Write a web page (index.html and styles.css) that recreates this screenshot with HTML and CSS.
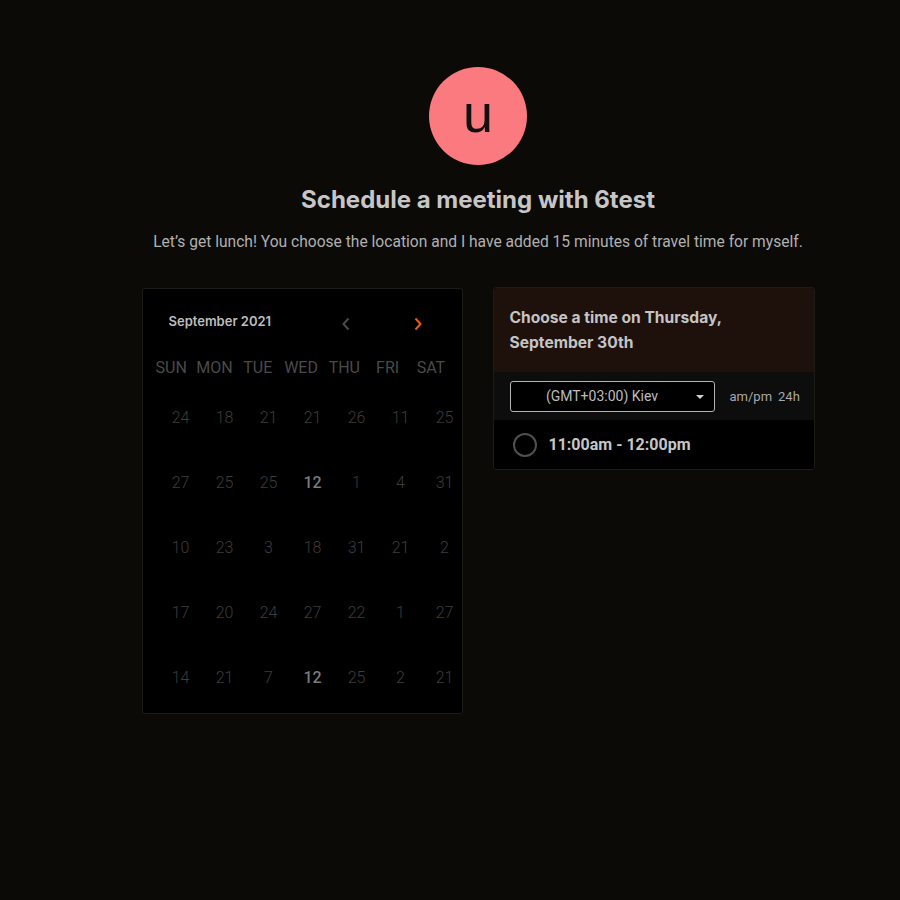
FILE: index.html
```html
<!DOCTYPE html>
<html>
<head>
<meta charset="utf-8">
<link rel="stylesheet" href="styles.css">
</head>
<body>
<main class="page">
  <div class="avatar">u</div>
  <h1 class="title">Schedule a meeting with 6test</h1>
  <p class="subtitle">Let’s get lunch! You choose the location and I have added 15 minutes of travel time for myself.</p>
  <div class="cards">
    <section class="calendar">
      <div class="cal-head">
        <span class="month">September 2021</span>
        <div class="nav">
          <svg class="chev prev" width="10" height="14" viewBox="0 0 10 14"><path d="M7.5 1.5 L2.5 7 L7.5 12.5" fill="none" stroke="currentColor" stroke-width="2"/></svg>
          <svg class="chev next" width="10" height="14" viewBox="0 0 10 14"><path d="M2.5 1.5 L7.5 7 L2.5 12.5" fill="none" stroke="currentColor" stroke-width="2"/></svg>
        </div>
      </div>
      <div class="weekdays">
        <span>SUN</span><span>MON</span><span>TUE</span><span>WED</span><span>THU</span><span>FRI</span><span>SAT</span>
      </div>
      <div class="days">
        <span>24</span><span>18</span><span>21</span><span>21</span><span>26</span><span>11</span><span>25</span>
        <span>27</span><span>25</span><span>25</span><span class="active">12</span><span>1</span><span>4</span><span>31</span>
        <span>10</span><span>23</span><span>3</span><span>18</span><span>31</span><span>21</span><span>2</span>
        <span>17</span><span>20</span><span>24</span><span>27</span><span>22</span><span>1</span><span>27</span>
        <span>14</span><span>21</span><span>7</span><span class="active">12</span><span>25</span><span>2</span><span>21</span>
      </div>
    </section>
    <section class="times">
      <div class="times-head">
        <h2>Choose a time on Thursday, September 30th</h2>
      </div>
      <div class="tz-row">
        <div class="tz-select">
          <span>(GMT+03:00) Kiev</span>
          <svg class="caret" width="8" height="4" viewBox="0 0 8 4"><path d="M0 0 H8 L4 4 Z" fill="#d0d0d0"/></svg>
        </div>
        <div class="fmt"><span>am/pm</span><span>24h</span></div>
      </div>
      <div class="slot">
        <span class="radio"></span>
        <span class="slot-text">11:00am - 12:00pm</span>
      </div>
    </section>
  </div>
</main>
</body>
</html>
```

FILE: styles.css
```css
html, body {
  margin: 0;
  padding: 0;
  background: #0b0a07;
}
.page {
  width: 900px;
  box-sizing: border-box;
  padding: 67px 0 0 56px;
  display: flex;
  flex-direction: column;
  align-items: center;
  font-family: Roboto, "Noto Sans", sans-serif;
}
.avatar {
  width: 98px;
  height: 98px;
  border-radius: 50%;
  background: #fa7a7f;
  color: #111;
  font-family: "Liberation Sans", Arial, sans-serif;
  font-size: 54px;
  line-height: 92px;
  text-align: center;
}
.title {
  margin: 20px 0 0;
  font-family: Inter, sans-serif;
  font-weight: 700;
  font-size: 24px;
  line-height: 30px;
  color: #c6c6c6;
  letter-spacing: 0;
}
.subtitle {
  margin: 17px 0 0;
  font-size: 15.6px;
  line-height: 20px;
  color: #b0b0b0;
}
.cards {
  margin-top: 35px;
  display: flex;
  align-items: flex-start;
  gap: 30px;
}
.calendar {
  width: 321px;
  height: 426px;
  box-sizing: border-box;
  background: #000;
  border: 1px solid #1d1b16;
  border-radius: 3px;
  margin-top: 1px;
  padding: 23px 0 0 7px;
}
.cal-head {
  display: flex;
  align-items: center;
  height: 18px;
  padding-left: 19px;
}
.month {
  font-family: Inter, sans-serif;
  font-weight: 600;
  font-size: 13px;
  color: #bdbdbd;
}
.nav {
  display: flex;
  gap: 62px;
  margin-left: 70px;
  margin-top: 6px;
}
.chev { display: block; }
.chev.prev { color: #4a4a4a; }
.chev.next { color: #e85a1b; }
.weekdays {
  display: grid;
  grid-template-columns: repeat(7, 43.3px);
  margin-top: 27px;
  height: 20px;
  align-items: center;
  font-size: 16px;
  color: #4a4a4a;
  text-align: center;
}
.days {
  display: grid;
  grid-template-columns: repeat(7, 44px);
  grid-auto-rows: 65px;
  margin: 8px 0 0 9px;
  width: 308px;
  align-items: center;
  text-align: center;
  font-size: 16px;
  font-weight: 300;
  color: #3d3d3d;
}
.days .active {
  color: #7a7a7a;
  font-weight: 500;
}
.times {
  width: 322px;
  box-sizing: border-box;
  border: 1px solid #1d1b16;
  border-radius: 3px;
  overflow: hidden;
  background: #000;
}
.times-head {
  background: #1e100b;
  height: 84px;
  box-sizing: border-box;
  padding: 17px 16px 0;
}
.times-head h2 {
  margin: 0;
  width: 240px;
  font-family: Inter, sans-serif;
  font-weight: 700;
  font-size: 15.6px;
  line-height: 25px;
  color: #c4c4c4;
}
.tz-row {
  background: #0d0d0d;
  height: 48px;
  display: flex;
  align-items: center;
  padding-left: 16px;
}
.tz-select {
  width: 205px;
  height: 31px;
  box-sizing: border-box;
  border: 1px solid #b4b4b4;
  border-radius: 3px;
  background: #000;
  display: flex;
  align-items: center;
  position: relative;
  font-size: 14px;
  color: #bcbcbc;
}
.tz-select span {
  flex: 1;
  text-align: center;
  padding-right: 20px;
}
.caret {
  position: absolute;
  right: 10px;
  top: 13px;
}
.fmt {
  display: flex;
  gap: 6px;
  margin-left: 15px;
  font-size: 13px;
  color: #a8a8a8;
}
.slot {
  height: 49px;
  display: flex;
  align-items: center;
  padding-left: 19px;
}
.radio {
  width: 20px;
  height: 20px;
  border: 2px solid #505050;
  border-radius: 50%;
}
.slot-text {
  margin-left: 12px;
  font-size: 16px;
  font-weight: 700;
  color: #c6c6c6;
}
```
